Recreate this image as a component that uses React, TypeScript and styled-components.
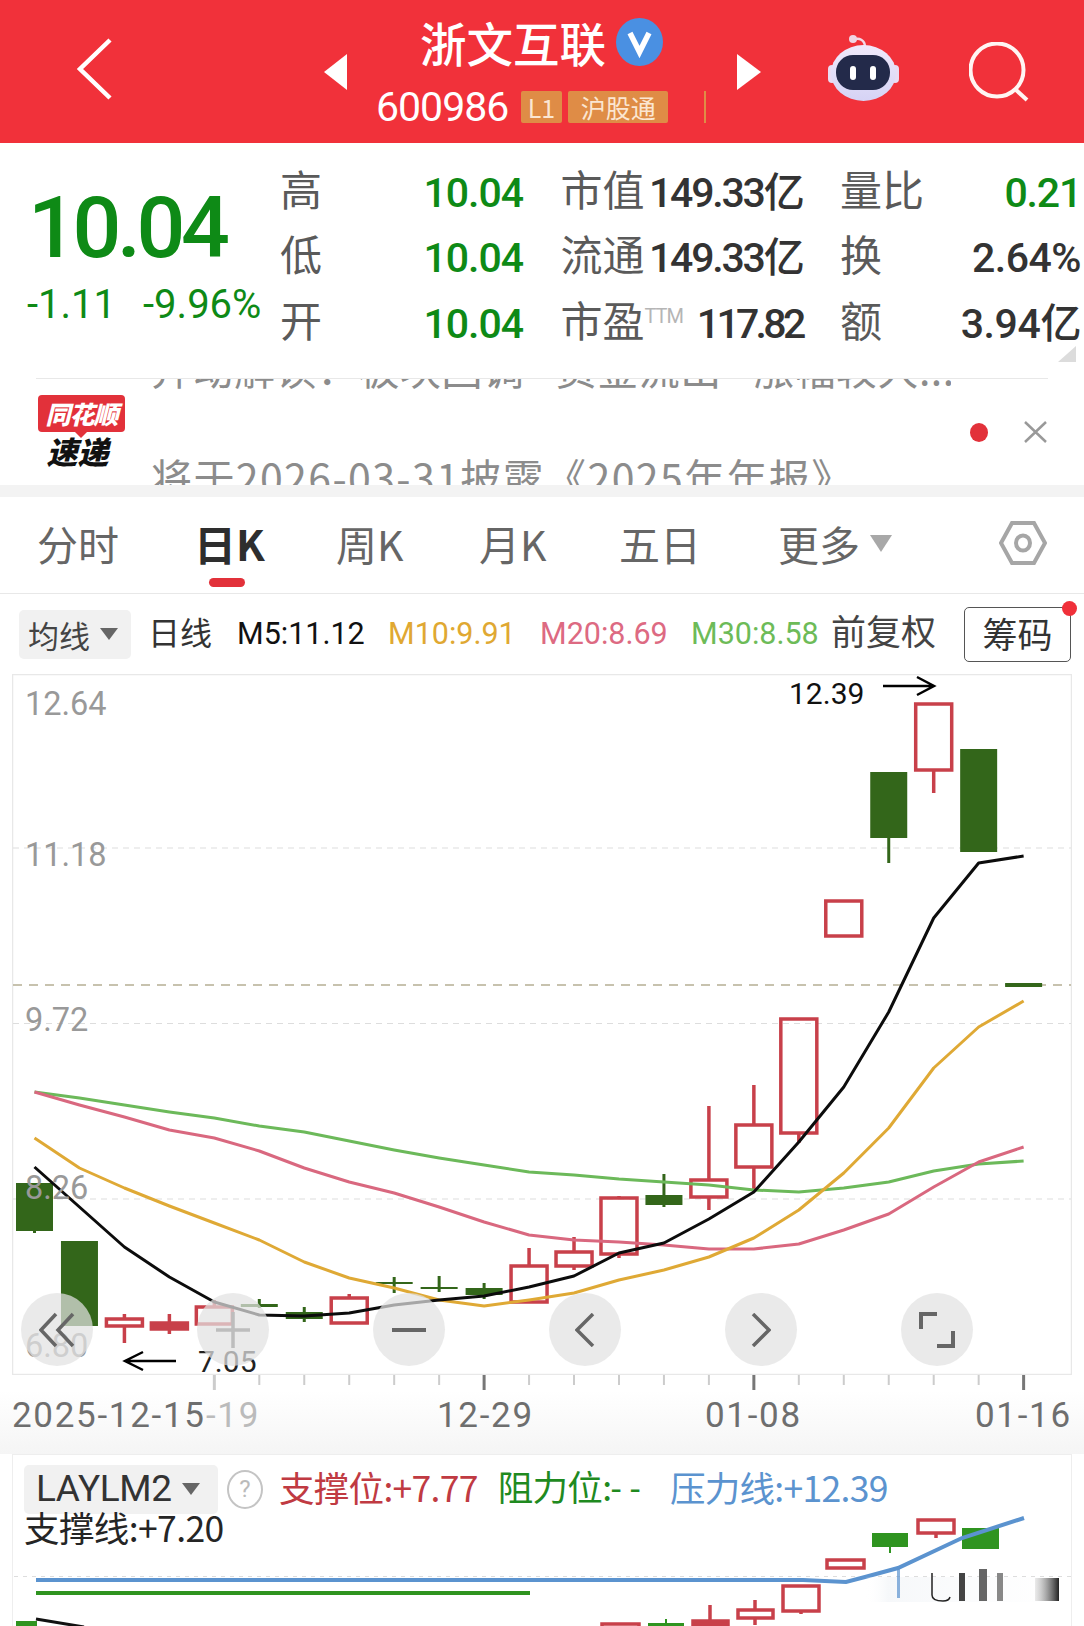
import styled, { createGlobalStyle } from 'styled-components';

const GlobalStyle = createGlobalStyle`
    html, body {
        margin: 0;
        padding: 0;
        background: #fff;
    }
    body {
        font-family: Roboto, "Noto Sans CJK SC", sans-serif;
    }
`

const Page = styled.div`
    width: 1084px;
    height: 1626px;
    overflow: hidden;
    background: #fff;
`

/* header */
const Header = styled.header`
    height: 143px;
    background: #f1313a;
    display: flex;
    align-items: center;
    padding-left: 77px;
    color: #fff;
`
const BackIcon = styled.svg`
    margin-top: -6px;
    flex: none;
`
const Arrow = styled.div<{ $dir: 'left' | 'right' }>`
    width: 0;
    height: 0;
    border-top: 18px solid transparent;
    border-bottom: 18px solid transparent;
    ${p => p.$dir === 'left' ? 'border-right: 23px solid #fff; margin-left: 212px;' : 'border-left: 24px solid #fff; margin-left: 31px;'}
`
const Stock = styled.div`
    width: 327px;
    margin-left: 32px;
    margin-top: -2px;
`
const TitleRow = styled.div`
    display: flex;
    align-items: center;
    height: 48px;
    padding-left: 41px;
    margin-bottom: 25px;
`
const Title = styled.div`
    font: 500 46.5px/48px "Noto Sans CJK SC", sans-serif;
    margin-right: 10px;
`
const CodeRow = styled.div`
    display: flex;
    align-items: center;
    height: 32px;
    margin-left: -3px;
`
const Code = styled.span`
    font: 400 41px/32px Roboto, sans-serif;
    letter-spacing: -1px;
    width: 145px;
`
const Tag = styled.span<{ $w: number }>`
    width: ${p => p.$w}px;
    height: 32px;
    margin-right: 6px;
    background: #df8c46;
    border-radius: 2px;
    color: #fbe6d2;
    font: 400 25px/32px "Noto Sans CJK SC", sans-serif;
    text-align: center;
`
const Sep = styled.span`
    width: 2px;
    height: 32px;
    margin-left: 30px;
    background: #df8c46;
`
const HeadIcon = styled.svg<{ $ml: number; $mt?: number }>`
    margin-left: ${p => p.$ml}px;
    margin-top: ${p => p.$mt ?? 0}px;
    flex: none;
`

/* quote */
const Quote = styled.section`
    position: relative;
    height: 235px;
    display: flex;
    padding-top: 15px;
    box-sizing: border-box;
`
const PriceBox = styled.div`
    width: 280px;
    flex: none;
    padding-top: 27px;
    box-sizing: border-box;
    color: #0e8a16;
`
const Price = styled.div`
    font: 500 86px/86px Roboto, sans-serif;
    letter-spacing: -4.4px;
    margin-left: 28px;
    height: 86px;
`
const Change = styled.div`
    display: flex;
    margin-top: 14px;
    margin-left: 27px;
    font: 400 40px/40px Roboto, sans-serif;
    gap: 27px;
`
const Stats = styled.div`
    display: grid;
    grid-template-columns: 243px 242px 241px;
    grid-auto-rows: 65.5px;
    column-gap: 37.5px;
`
const Stat = styled.div`
    display: flex;
    justify-content: space-between;
    align-items: center;
`
const StatLabel = styled.span`
    font: 400 42px/44px "Noto Sans CJK SC", sans-serif;
    color: #5a5a5a;
    white-space: nowrap;
    margin-bottom: 6px;
`
const Ttm = styled.sup`
    font: 400 20px/20px Roboto, sans-serif;
    color: #b5b5b5;
    letter-spacing: -1px;
    vertical-align: 14px;
`
const StatValue = styled.span<{ $green?: boolean; $ls?: number }>`
    font: 500 41px/44px Roboto, "Noto Sans CJK SC", sans-serif;
    letter-spacing: ${p => p.$ls ?? -2.2}px;
    color: ${p => p.$green ? '#0e8a16' : '#333'};
    white-space: nowrap;
    margin-top: 4px;
`
const Corner = styled.div`
    position: absolute;
    right: 8px;
    bottom: 16px;
    width: 0;
    height: 0;
    border-left: 18px solid transparent;
    border-bottom: 16px solid #dcdcdc;
`

/* news ticker */
const News = styled.section`
    height: 107px;
    margin: 0 36px;
    border-top: 1px solid #e8e8e8;
    box-sizing: border-box;
    display: flex;
`
const Logo = styled.div`
    width: 87px;
    margin-left: 2px;
    margin-top: 16px;
    flex: none;
    text-align: center;
`
const LogoBubble = styled.div`
    position: relative;
    height: 37px;
    background: #e2313a;
    border-radius: 4px;
    color: #fff;
    font: italic 900 25px/37px "Noto Sans CJK SC", sans-serif;
    letter-spacing: -1px;
    &::after {
        content: "";
        position: absolute;
        left: 37px;
        bottom: -6px;
        border-left: 6px solid transparent;
        border-right: 6px solid transparent;
        border-top: 6px solid #e2313a;
    }
`
const LogoText = styled.div`
    margin-top: 4px;
    margin-right: 8px;
    font: italic 900 31px/30px "Noto Sans CJK SC", sans-serif;
    color: #111;
`
const Ticker = styled.div`
    margin-left: 26px;
    width: 800px;
    height: 106px;
    overflow: hidden;
    color: #8c8c8c;
    font: 400 41px/42px "Noto Sans CJK SC", sans-serif;
    white-space: nowrap;
`
const TickerLine = styled.div`
    height: 42px;
    margin-top: -33px;
    letter-spacing: 0.5px;
`
const TickerDate = styled.div`
    height: 42px;
    margin-top: 67px;
    letter-spacing: 1.4px;
`
const TickerSep = styled.span`
    font-family: Roboto, sans-serif;
    padding: 0 10px;
`
const Dot = styled.div`
    width: 18px;
    height: 19px;
    margin: 44px 0 0 19px;
    border-radius: 50%;
    background: #e2313a;
    flex: none;
`
const CloseIcon = styled.svg`
    margin: 42px 0 0 36px;
    flex: none;
`
const Band = styled.div`
    height: 12px;
    background: #f3f3f3;
`

/* tabs */
const Tabs = styled.nav`
    height: 97px;
    border-bottom: 1px solid #e8e8e8;
    box-sizing: border-box;
    display: grid;
    grid-template-columns: 157px 142px 143px 140px 159px 221px auto;
    align-items: center;
    padding-left: 37px;
    padding-bottom: 5px;
`
const Tab = styled.div<{ $active?: boolean }>`
    position: relative;
    display: flex;
    align-items: center;
    font: ${p => p.$active ? 700 : 400} ${p => p.$active ? 42 : 41}px/48px "Noto Sans CJK SC", Roboto, sans-serif;
    color: ${p => p.$active ? '#2e2e2e' : '#666'};
    ${p => p.$active && `
        &::after {
            content: "";
            position: absolute;
            left: 15px;
            top: 59px;
            width: 36px;
            height: 9px;
            border-radius: 5px;
            background: #e2313a;
        }
    `}
`
const TabArrow = styled.span`
    width: 0;
    height: 0;
    margin-left: 10px;
    margin-top: 2px;
    border-left: 11px solid transparent;
    border-right: 11px solid transparent;
    border-top: 17px solid #a8a8a8;
`

/* moving average legend */
const Legend = styled.div`
    height: 80px;
    display: grid;
    grid-template-columns: 129px 89px 151px 152px 151px 140px 133px 107px;
    align-items: center;
    padding-left: 19px;
`
const Chip = styled.div<{ $w: number }>`
    width: ${p => p.$w}px;
    height: 49px;
    box-sizing: border-box;
    padding-left: 9px;
    background: #f1f1f1;
    border-radius: 5px;
    display: flex;
    align-items: center;
    font: 400 31px/45px "Noto Sans CJK SC", Roboto, sans-serif;
    color: #444;
`
const ChipArrow = styled.span`
    width: 0;
    height: 0;
    margin-left: 10px;
    border-left: 9px solid transparent;
    border-right: 9px solid transparent;
    border-top: 12px solid #666;
`
const MaText = styled.div<{ $color: string; $size?: number }>`
    font: 400 ${p => p.$size ?? 30.5}px/44px Roboto, "Noto Sans CJK SC", sans-serif;
    color: ${p => p.$color};
    white-space: nowrap;
`
const ChipBox = styled.div`
    position: relative;
    width: 107px;
    height: 55px;
    box-sizing: border-box;
    border: 1.5px solid #555;
    border-radius: 5px;
    font: 400 35px/50px "Noto Sans CJK SC", sans-serif;
    text-align: center;
    color: #333;
    &::after {
        content: "";
        position: absolute;
        right: -7px;
        top: -7px;
        width: 15px;
        height: 15px;
        border-radius: 50%;
        background: #f0303a;
    }
`

/* main chart */
const ChartArea = styled.div`
    position: relative;
    margin-left: 12px;
    width: 1060px;
    height: 701px;
`
const ChartSvg = styled.svg`
    display: block;
    text {
        font-family: Roboto, sans-serif;
    }
`
const Controls = styled.div`
    position: absolute;
    left: 9px;
    top: 619px;
    display: flex;
    gap: 104px;
`
const RoundBtn = styled.div`
    width: 72px;
    height: 73px;
    border-radius: 50%;
    background: rgba(226, 226, 226, 0.72);
    display: flex;
    align-items: center;
    justify-content: center;
`

/* axis */
const Axis = styled.div`
    height: 79px;
    box-sizing: border-box;
    background: linear-gradient(#fff 20%, #f5f5f5 100%);
`
const AxisTicks = styled.svg`
    display: block;
`
const AxisLabels = styled.div`
    margin-top: 7px;
    padding-left: 12px;
    display: grid;
    grid-template-columns: 194px 231px 268px 270px 96px;
    font: 400 35px/36px Roboto, sans-serif;
    letter-spacing: 1.7px;
    color: #6e6e6e;
    white-space: nowrap;
`
const FadedLabel = styled.span`
    color: #bbb;
`

/* indicator panel */
const Indicator = styled.section`
    margin-left: 12px;
    width: 1060px;
    height: 172px;
    border: 1px solid #eee;
    border-bottom: 0;
    box-sizing: border-box;
    display: grid;
    overflow: hidden;
    background: #fff;
`
const IndicatorText = styled.div`
    grid-area: 1 / 1;
    z-index: 1;
    padding: 10px 0 0 11px;
`
const IndicatorRow = styled.div`
    display: flex;
    align-items: center;
    height: 48px;
`
const Help = styled.span`
    width: 32px;
    height: 35px;
    margin-left: 9px;
    border: 2.5px solid #c4c4c4;
    border-radius: 50%;
    color: #bbb;
    font: 400 24px/35px Roboto, sans-serif;
    text-align: center;
    flex: none;
`
const IndicatorValue = styled.span<{ $color: string; $ml: number }>`
    margin-left: ${p => p.$ml}px;
    margin-top: -4px;
    font: 400 35.5px/44px "Noto Sans CJK SC", Roboto, sans-serif;
    letter-spacing: -0.7px;
    color: ${p => p.$color};
    white-space: nowrap;
`
const WideDash = styled.span`
    letter-spacing: 9px;
    font-family: Roboto, sans-serif;
`
const SupportLine = styled.div`
    margin-top: -2px;
    font: 400 35.5px/32px "Noto Sans CJK SC", Roboto, sans-serif;
    letter-spacing: -0.6px;
    color: #252525;
`
const IndicatorName = styled.span`
    font: 400 37px/48px Roboto, sans-serif;
    letter-spacing: -0.4px;
    color: #333;
    margin-left: 3px;
`
const SubSvg = styled.svg`
    grid-area: 1 / 1;
    display: block;
`

const RED = '#c8404a'
const GREEN = '#33661a'
const xAt = (i: number) => 34.5 + i * 44.96

type Candle = { i: number; top: number; bottom: number; high?: number; low?: number; up: boolean; solid?: boolean }

const candles: Candle[] = [
    { i: 0, top: 1183, bottom: 1231, low: 1233, up: false },
    { i: 1, top: 1241, bottom: 1326, up: false },
    { i: 2, top: 1319, bottom: 1326, high: 1314, low: 1343, up: true },
    { i: 3, top: 1323, bottom: 1329, high: 1314, low: 1334, up: true, solid: true },
    { i: 4, top: 1307, bottom: 1324, high: 1300, up: true },
    { i: 5, top: 1304, bottom: 1307, high: 1299, low: 1308, up: false },
    { i: 6, top: 1312, bottom: 1319, high: 1307, low: 1322, up: false },
    { i: 7, top: 1298, bottom: 1323, high: 1294, up: true },
    { i: 8, top: 1282, bottom: 1284, high: 1277, low: 1293, up: false },
    { i: 9, top: 1287, bottom: 1289, high: 1276, low: 1292, up: false },
    { i: 10, top: 1288, bottom: 1295, high: 1283, low: 1299, up: false },
    { i: 11, top: 1266, bottom: 1302, high: 1248, up: true },
    { i: 12, top: 1252, bottom: 1266, high: 1237, low: 1270, up: true },
    { i: 13, top: 1198, bottom: 1254, high: 1196, low: 1258, up: true },
    { i: 14, top: 1195, bottom: 1205, high: 1174, low: 1207, up: false },
    { i: 15, top: 1180, bottom: 1197, high: 1106, low: 1210, up: true },
    { i: 16, top: 1125, bottom: 1167, high: 1085, low: 1192, up: true },
    { i: 17, top: 1019, bottom: 1133, low: 1143, up: true },
    { i: 18, top: 901, bottom: 936, up: true },
    { i: 19, top: 772, bottom: 838, low: 863, up: false },
    { i: 20, top: 704, bottom: 770, low: 793, up: true },
    { i: 21, top: 749, bottom: 852, up: false },
    { i: 22, top: 983, bottom: 987, up: false },
]

const m5 = [1167, 1207, 1247, 1277, 1302, 1315, 1316, 1313, 1305, 1300, 1296, 1287, 1276, 1253, 1243, 1219, 1192, 1142, 1087, 1012, 918, 863, 856]
const m10 = [1138, 1168, 1188, 1206, 1223, 1240, 1262, 1278, 1288, 1300, 1306, 1300, 1293, 1280, 1270, 1257, 1238, 1210, 1173, 1128, 1068, 1027, 1001]
const m20 = [1092, 1105, 1117, 1130, 1138, 1151, 1168, 1182, 1193, 1207, 1222, 1235, 1240, 1242, 1245, 1249, 1249, 1244, 1230, 1214, 1187, 1162, 1147]
const m30 = [1092, 1098, 1105, 1112, 1118, 1126, 1132, 1141, 1150, 1158, 1165, 1172, 1175, 1179, 1182, 1185, 1190, 1192, 1188, 1182, 1171, 1164, 1161]

const points = (vals: number[]) => vals.map((y, i) => `${xAt(i)},${y}`).join(' ')

const CandleMark = ({ c }: { c: Candle }) => {
    const x = xAt(c.i)
    if (!c.up) {
        return (
            <g>
                {(c.high || c.low) && <line x1={x} x2={x} y1={c.high ?? c.top} y2={c.low ?? c.bottom} stroke={GREEN} strokeWidth="3" />}
                <rect x={x - 18.5} y={c.top} width="37" height={c.bottom - c.top} fill={GREEN} />
            </g>
        )
    }
    return (
        <g stroke={RED} strokeWidth="3.5" fill="none">
            {c.high && <line x1={x} x2={x} y1={c.high} y2={c.top} />}
            {c.low && <line x1={x} x2={x} y1={c.bottom} y2={c.low} />}
            <rect x={x - 18} y={c.top} width="36" height={c.bottom - c.top} fill={c.solid ? RED : 'none'} />
        </g>
    )
}

const priceLabels = [
    { y: 715, t: '12.64' },
    { y: 866, t: '11.18' },
    { y: 1031, t: '9.72' },
    { y: 1199, t: '8.26' },
    { y: 1357, t: '6.80' },
]

const MainChart = () => (
    <ChartSvg width="1060" height="701" viewBox="12 674 1060 701">
        <rect x="12.5" y="674.5" width="1059" height="700" fill="none" stroke="#e8e8e8" strokeWidth="1.5" />
        {[848, 1023.5, 1199].map(y => (
            <line key={y} x1="13" x2="1071" y1={y} y2={y} stroke="#ddd" strokeDasharray="6 5" />
        ))}
        <line x1="13" x2="1071" y1="985" y2="985" stroke="#b5ae94" strokeWidth="1.5" strokeDasharray="9 7" />
        {candles.map(c => <CandleMark key={c.i} c={c} />)}
        <g fill="none" strokeWidth="3" strokeLinejoin="round">
            <polyline points={points(m30)} stroke="#6cb95a" />
            <polyline points={points(m20)} stroke="#d9687f" />
            <polyline points={points(m10)} stroke="#dfa935" />
            <polyline points={points(m5)} stroke="#0c0c0c" />
        </g>
        {priceLabels.map(l => (
            <text key={l.t} x="25" y={l.y} fontSize="32.5" fill="#999">{l.t}</text>
        ))}
        <text x="789" y="704" fontSize="30" fill="#111">12.39</text>
        <path d="M883 686H934M917 677L934 686L917 695" fill="none" stroke="#000" strokeWidth="2.5" />
        <text x="198" y="1372" fontSize="30" fill="#222">7.05</text>
        <path d="M176 1361H125M143 1352L125 1361L143 1370" fill="none" stroke="#000" strokeWidth="2.5" />
    </ChartSvg>
)

// the first four slots have no tick in the screenshot
const ticks = Array.from({ length: 19 }, (_, i) => i + 4)
const majorTicks = [10, 16, 22]

const TickMarks = () => (
    <AxisTicks width="1084" height="16" viewBox="0 0 1084 16">
        {ticks.map(i => {
            const major = majorTicks.includes(i)
            return (
                <line
                    key={i}
                    x1={xAt(i)}
                    x2={xAt(i)}
                    y1="0"
                    y2={major || i === 4 ? 15 : 10}
                    stroke={major ? '#777' : '#ccc'}
                    strokeWidth={major || i === 4 ? 3 : 2}
                />
            )
        })}
    </AxisTicks>
)

const SubChart = () => (
    <SubSvg width="1060" height="172" viewBox="12 1454 1060 172">
        <defs>
            <linearGradient id="fade" x1="0" x2="1" y1="0" y2="0">
                <stop offset="0" stopColor="#fff" stopOpacity="0" />
                <stop offset="0.12" stopColor="#f6f8fa" />
                <stop offset="1" stopColor="#fff" stopOpacity="0.7" />
            </linearGradient>
            <linearGradient id="bar" x1="0" x2="1" y1="0" y2="0">
                <stop offset="0" stopColor="#bbb" stopOpacity="0.3" />
                <stop offset="1" stopColor="#222" />
            </linearGradient>
        </defs>
        <line x1="13" x2="1071" y1="1575.5" y2="1575.5" stroke="#ddd" strokeDasharray="4 5" />
        <g stroke={RED} strokeWidth="3.5" fill="none">
            <rect x="917" y="1519" width="36" height="13" />
            <line x1="935" x2="935" y1="1532" y2="1537" />
            <rect x="826" y="1559" width="37" height="8" />
            <rect x="782" y="1585" width="36" height="25" />
            <line x1="800" x2="800" y1="1610" y2="1613" />
            <rect x="737" y="1609" width="35" height="8" />
            <line x1="754" x2="754" y1="1599" y2="1609" />
            <line x1="754" x2="754" y1="1617" y2="1624" />
            <line x1="709" x2="709" y1="1604" y2="1626" />
            <rect x="692" y="1620" width="35" height="8" fill={RED} />
            <rect x="601" y="1623" width="37" height="10" />
        </g>
        <g fill="#2f9420">
            <rect x="961" y="1527" width="37" height="21" />
            <rect x="871" y="1532" width="36" height="14" />
            <rect x="888" y="1546" width="2" height="6" />
            <rect x="647" y="1622" width="36" height="3" />
            <rect x="664" y="1618" width="2" height="8" />
            <rect x="15" y="1620" width="21" height="6" />
        </g>
        <line x1="35" x2="529" y1="1592" y2="1592" stroke="#2f9420" strokeWidth="4" />
        <polyline points="35,1579 802,1579 845,1581 864,1576 897,1567 961,1537 1023,1517" fill="none" stroke="#5b93cf" strokeWidth="4" />
        <path d="M35 1618L83 1626" fill="none" stroke="#111" strokeWidth="3" />
        <rect x="864" y="1576" width="194" height="25" fill="url(#fade)" />
        <rect x="896" y="1567" width="3" height="30" fill="#5b93cf" opacity="0.7" />
        <path d="M931 1572V1594Q931 1600 942 1600Q948 1600 949 1596" fill="none" stroke="#222" strokeWidth="1.5" />
        <rect x="958" y="1572" width="6" height="28" fill="#444" />
        <rect x="978" y="1568" width="8" height="32" fill="#666" />
        <rect x="996" y="1572" width="6" height="28" fill="#888" />
        <rect x="1034" y="1577" width="24" height="23" fill="url(#bar)" />
    </SubSvg>
)

const App = () => {
    return (
        <Page>
            <GlobalStyle />
            <Header>
                <BackIcon width="35" height="62" viewBox="0 0 35 62" fill="none" stroke="#fff" strokeWidth="4.5">
                    <path d="M33 2L3 31L33 60" />
                </BackIcon>
                <Arrow $dir="left" />
                <Stock>
                    <TitleRow>
                        <Title>浙文互联</Title>
                        <svg width="47" height="48" viewBox="0 0 47 48">
                            <ellipse cx="23.5" cy="24" rx="23.5" ry="24" fill="#4a90e2" />
                            <path d="M14 15L23.5 34L33 15" fill="none" stroke="#fff" strokeWidth="5.5" />
                        </svg>
                    </TitleRow>
                    <CodeRow>
                        <Code>600986</Code>
                        <Tag $w={42}>L1</Tag>
                        <Tag $w={100}>沪股通</Tag>
                        <Sep />
                    </CodeRow>
                </Stock>
                <Arrow $dir="right" />
                <HeadIcon $ml={67} $mt={-8} width="72" height="66" viewBox="0 0 72 66">
                    <defs>
                        <linearGradient id="helmet" x1="0" x2="0" y1="0" y2="1">
                            <stop offset="0" stopColor="#f0e9fb" />
                            <stop offset="1" stopColor="#d5d3f5" />
                        </linearGradient>
                    </defs>
                    <path d="M25 5C31 2 37 5 37 12" fill="none" stroke="#f3d8e6" strokeWidth="2.5" />
                    <circle cx="25" cy="4" r="4" fill="#f0d5e4" />
                    <rect x="0" y="30" width="8" height="18" rx="4" fill="#e9dcf3" />
                    <rect x="63" y="30" width="8" height="18" rx="4" fill="#e9dcf3" />
                    <ellipse cx="35.5" cy="38" rx="32.5" ry="28" fill="url(#helmet)" />
                    <rect x="8" y="20" width="54" height="35" rx="17" fill="#232a4a" />
                    <rect x="22" y="31" width="6" height="14" rx="3" fill="#fff" />
                    <rect x="42" y="31" width="6" height="14" rx="3" fill="#fff" />
                </HeadIcon>
                <HeadIcon $ml={69} width="60" height="60" viewBox="0 0 60 60" fill="none" stroke="#fff5f3" strokeWidth="4">
                    <circle cx="28" cy="28" r="26.5" />
                    <path d="M46 47L58 58" />
                </HeadIcon>
            </Header>

            <Quote>
                <PriceBox>
                    <Price>10.04</Price>
                    <Change>
                        <span>-1.11</span>
                        <span>-9.96%</span>
                    </Change>
                </PriceBox>
                <Stats>
                    <Stat><StatLabel>高</StatLabel><StatValue $green $ls={-1}>10.04</StatValue></Stat>
                    <Stat><StatLabel>市值</StatLabel><StatValue>149.33亿</StatValue></Stat>
                    <Stat><StatLabel>量比</StatLabel><StatValue $green $ls={-1.2}>0.21</StatValue></Stat>
                    <Stat><StatLabel>低</StatLabel><StatValue $green $ls={-1}>10.04</StatValue></Stat>
                    <Stat><StatLabel>流通</StatLabel><StatValue>149.33亿</StatValue></Stat>
                    <Stat><StatLabel>换</StatLabel><StatValue $ls={-0.5}>2.64%</StatValue></Stat>
                    <Stat><StatLabel>开</StatLabel><StatValue $green $ls={-1}>10.04</StatValue></Stat>
                    <Stat><StatLabel>市盈<Ttm>TTM</Ttm></StatLabel><StatValue $ls={-3.7}>117.82</StatValue></Stat>
                    <Stat><StatLabel>额</StatLabel><StatValue $ls={-0.4}>3.94亿</StatValue></Stat>
                </Stats>
                <Corner />
            </Quote>

            <News>
                <Logo>
                    <LogoBubble>同花顺</LogoBubble>
                    <LogoText>速递</LogoText>
                </Logo>
                <Ticker>
                    <TickerLine>异动解读：板块回调<TickerSep>·</TickerSep>资金流出<TickerSep>·</TickerSep>涨幅较大...</TickerLine>
                    <TickerDate>将于2026-03-31披露《2025年年报》</TickerDate>
                </Ticker>
                <Dot />
                <CloseIcon width="23" height="22" viewBox="0 0 23 22" stroke="#999" strokeWidth="2.5">
                    <path d="M1 1L22 21M22 1L1 21" />
                </CloseIcon>
            </News>
            <Band />

            <Tabs>
                <Tab>分时</Tab>
                <Tab $active>日K</Tab>
                <Tab>周K</Tab>
                <Tab>月K</Tab>
                <Tab>五日</Tab>
                <Tab>更多<TabArrow /></Tab>
                <svg width="48" height="44" viewBox="0 0 48 44" fill="none" stroke="#a6a6a6" strokeWidth="4">
                    <path d="M13 2H35L46 22L35 42H13L2 22Z" />
                    <ellipse cx="24" cy="22" rx="7" ry="7.5" />
                </svg>
            </Tabs>

            <Legend>
                <Chip $w={112}>均线<ChipArrow /></Chip>
                <MaText $color="#333" $size={32}>日线</MaText>
                <MaText $color="#111">M5:11.12</MaText>
                <MaText $color="#e0a832">M10:9.91</MaText>
                <MaText $color="#dd6a82">M20:8.69</MaText>
                <MaText $color="#6dbb58">M30:8.58</MaText>
                <MaText $color="#444" $size={35}>前复权</MaText>
                <ChipBox>筹码</ChipBox>
            </Legend>

            <ChartArea>
                <MainChart />
                <Controls>
                    <RoundBtn>
                        <svg width="36" height="36" viewBox="0 0 36 36" fill="none" stroke="#666" strokeWidth="3.5">
                            <path d="M17 2L2 18L17 34M34 2L19 18L34 34" />
                        </svg>
                    </RoundBtn>
                    <RoundBtn>
                        <svg width="34" height="36" viewBox="0 0 34 36" stroke="#bdbdbd" strokeWidth="3.5">
                            <path d="M0 18H34M17 0V36" />
                        </svg>
                    </RoundBtn>
                    <RoundBtn>
                        <svg width="34" height="6" viewBox="0 0 34 6" stroke="#666" strokeWidth="4">
                            <path d="M0 3H34" />
                        </svg>
                    </RoundBtn>
                    <RoundBtn>
                        <svg width="20" height="34" viewBox="0 0 20 34" fill="none" stroke="#666" strokeWidth="3.5">
                            <path d="M18 1L2 17L18 33" />
                        </svg>
                    </RoundBtn>
                    <RoundBtn>
                        <svg width="20" height="34" viewBox="0 0 20 34" fill="none" stroke="#666" strokeWidth="3.5">
                            <path d="M2 1L18 17L2 33" />
                        </svg>
                    </RoundBtn>
                    <RoundBtn>
                        <svg width="36" height="36" viewBox="0 0 36 36" fill="none" stroke="#666" strokeWidth="4">
                            <path d="M2 17V2H18M34 19V34H18" />
                        </svg>
                    </RoundBtn>
                </Controls>
            </ChartArea>

            <Axis>
                <TickMarks />
                <AxisLabels>
                    <span>2025-12-15</span>
                    <FadedLabel>-19</FadedLabel>
                    <span>12-29</span>
                    <span>01-08</span>
                    <span>01-16</span>
                </AxisLabels>
            </Axis>

            <Indicator>
                <SubChart />
                <IndicatorText>
                    <IndicatorRow>
                        <Chip $w={194}>
                            <IndicatorName>LAYLM2</IndicatorName>
                            <ChipArrow />
                        </Chip>
                        <Help>?</Help>
                        <IndicatorValue $color="#c03a42" $ml={16}>支撑位:+7.77</IndicatorValue>
                        <IndicatorValue $color="#1f8a1f" $ml={20}>阻力位:<WideDash>--</WideDash></IndicatorValue>
                        <IndicatorValue $color="#5b93cf" $ml={21}>压力线:+12.39</IndicatorValue>
                    </IndicatorRow>
                    <SupportLine>支撑线:+7.20</SupportLine>
                </IndicatorText>
            </Indicator>
        </Page>
    )
}

export default App
